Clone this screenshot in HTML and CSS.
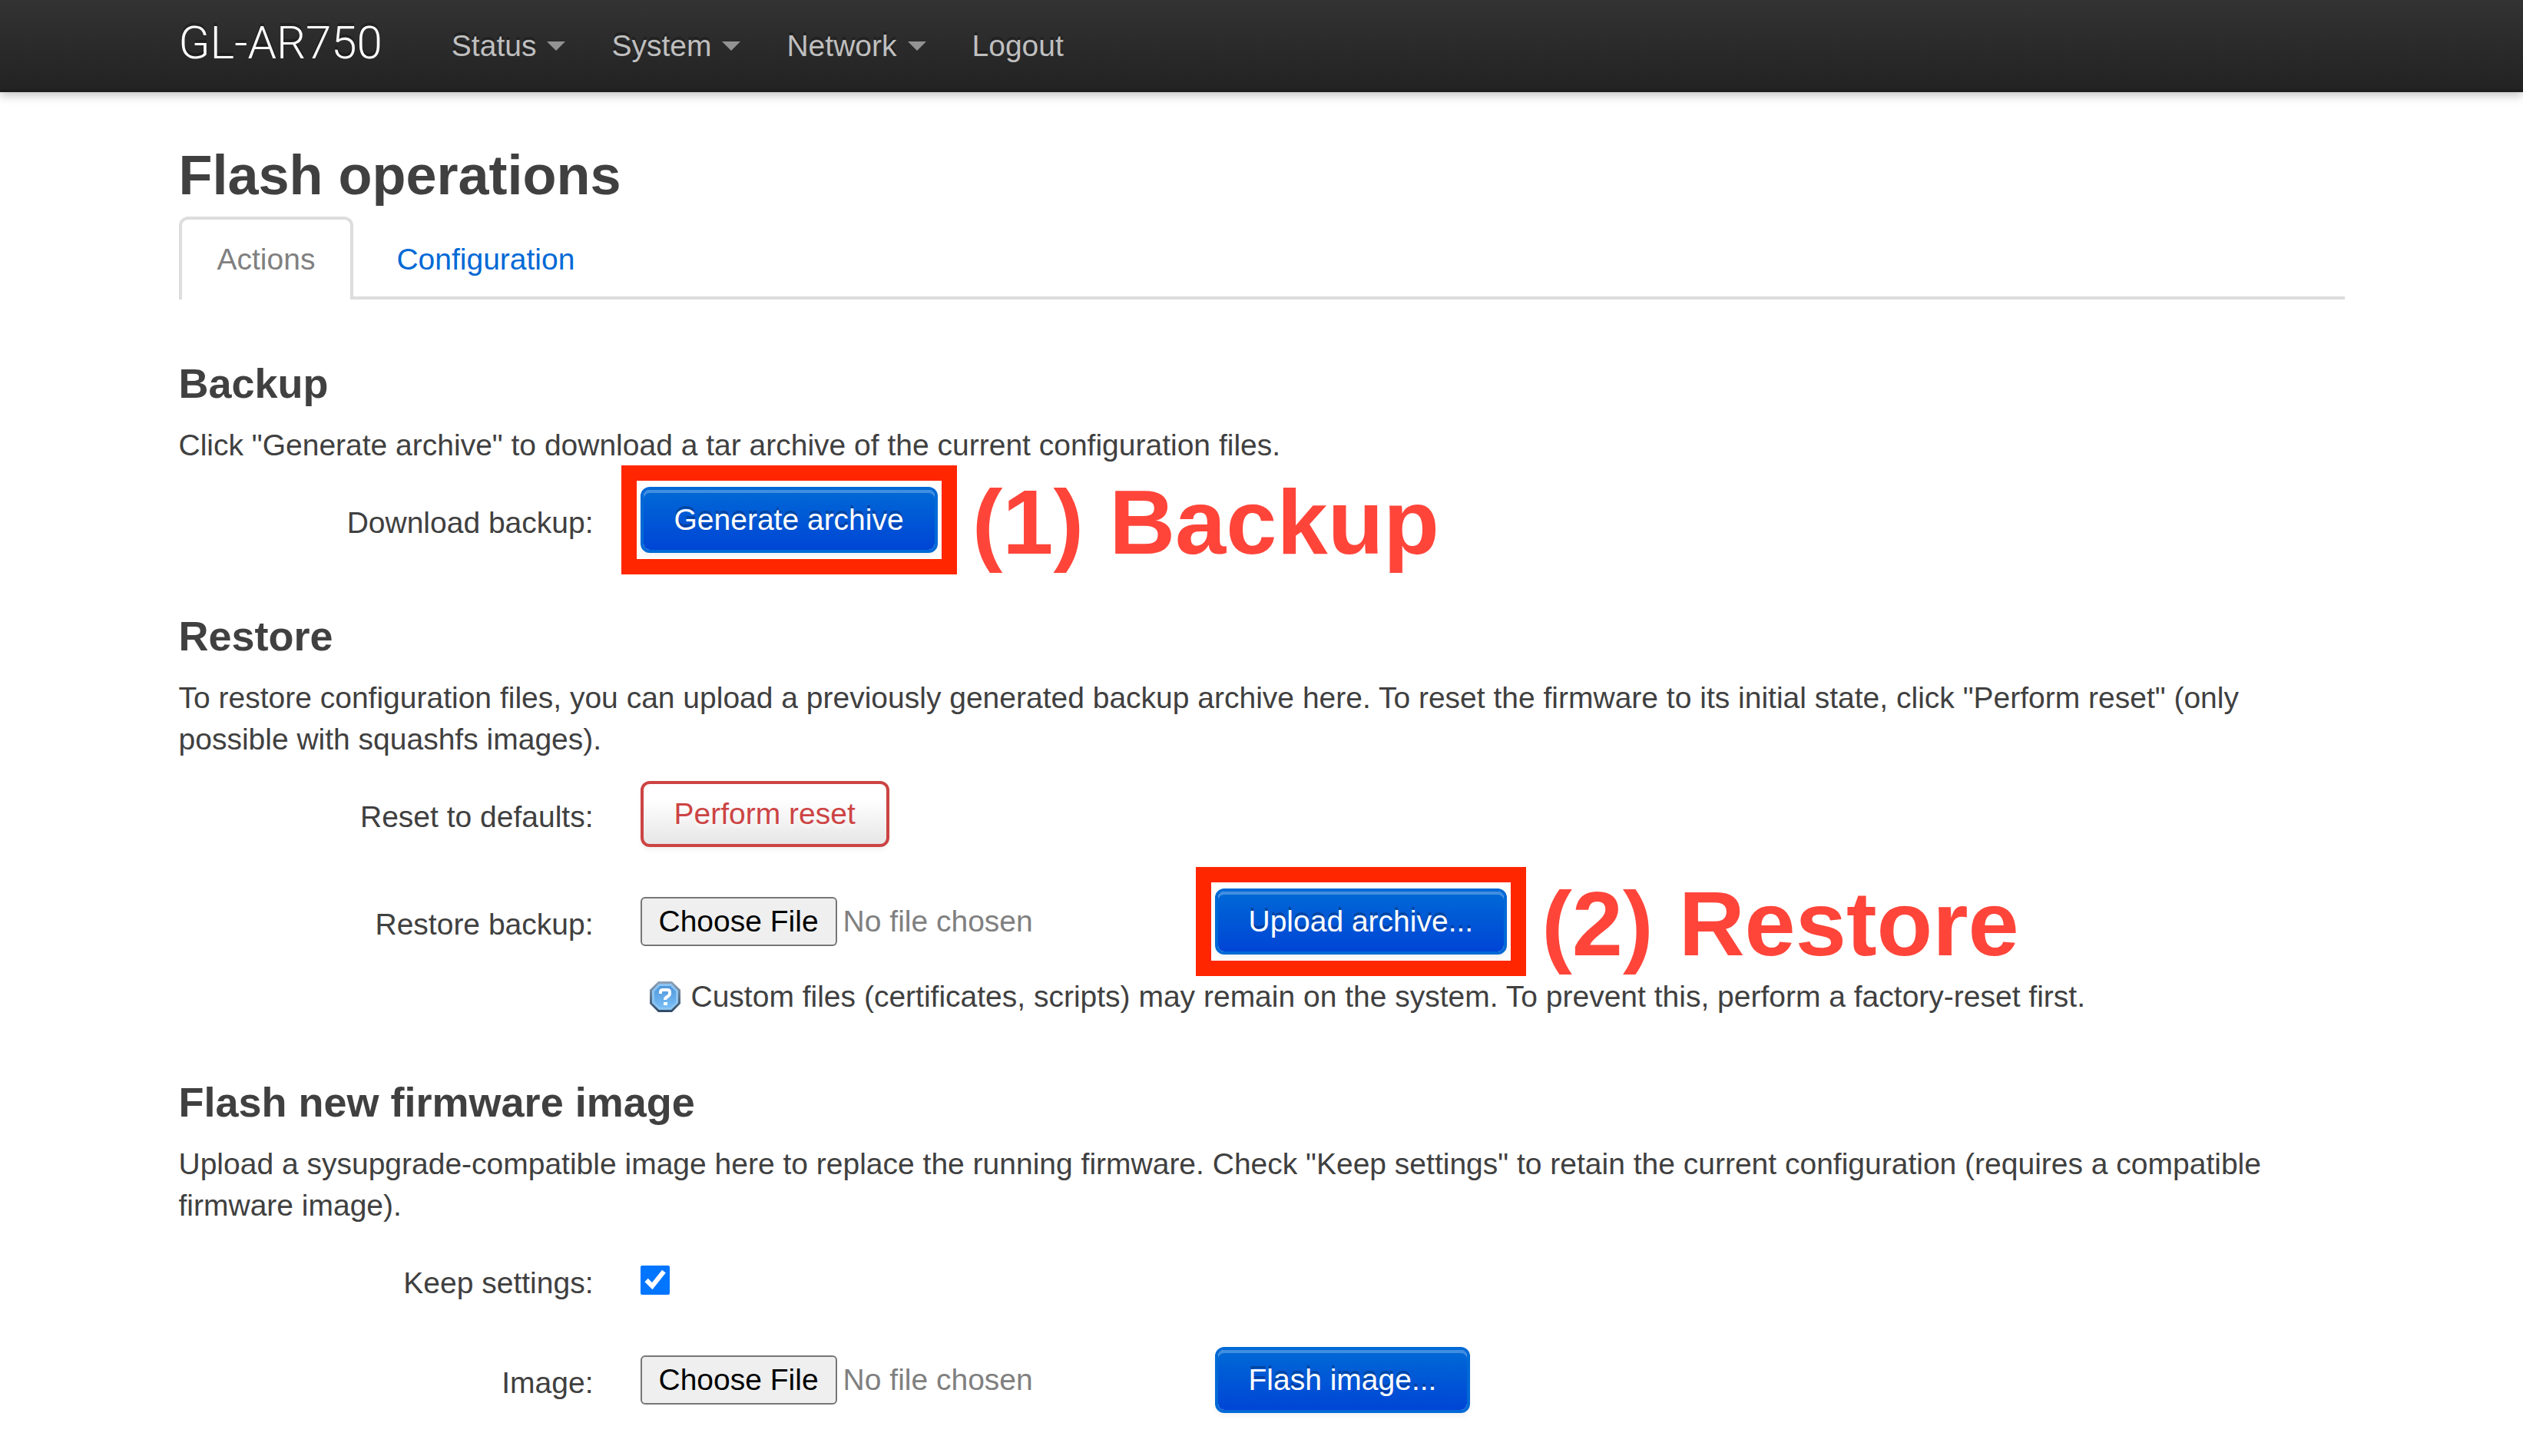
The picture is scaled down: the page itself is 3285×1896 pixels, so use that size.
FILE: index.html
```html
<!DOCTYPE html>
<html lang="en">
<head>
<meta charset="utf-8">
<title>GL-AR750 - Flash operations</title>
<link rel="stylesheet" href="styles.css">
</head>
<body>
<header class="topbar">
  <div class="container topbar-inner">
    <a class="brand" href="#">GL-AR750</a>
    <nav class="nav">
      <a class="nav-link" href="#">Status<span class="caret"></span></a>
      <a class="nav-link" href="#">System<span class="caret"></span></a>
      <a class="nav-link" href="#">Network<span class="caret"></span></a>
      <a class="nav-link" href="#">Logout</a>
    </nav>
  </div>
</header>
<main class="container main">
  <h2 class="title">Flash operations</h2>
  <ul class="tabs">
    <li><a class="tab tab-active" href="#">Actions</a></li>
    <li><a class="tab" href="#">Configuration</a></li>
  </ul>

  <section>
    <h3 class="subtitle">Backup</h3>
    <p class="descr">Click "Generate archive" to download a tar archive of the current configuration files.</p>
    <div class="row">
      <label class="row-label" for="generate">Download backup:</label>
      <div class="field">
        <div class="marked">
          <button class="btn btn-primary" id="generate" type="button">Generate archive</button>
          <span class="mark-frame"></span>
          <span class="mark-text">(1) Backup</span>
        </div>
      </div>
    </div>
  </section>

  <section>
    <h3 class="subtitle">Restore</h3>
    <p class="descr">To restore configuration files, you can upload a previously generated backup archive here. To reset the firmware to its initial state, click "Perform reset" (only possible with squashfs images).</p>
    <div class="row">
      <label class="row-label" for="reset">Reset to defaults:</label>
      <div class="field">
        <button class="btn btn-danger" id="reset" type="button">Perform reset</button>
      </div>
    </div>
    <div class="row">
      <label class="row-label" for="archive">Restore backup:</label>
      <div class="field">
        <div class="upload">
          <input class="file" id="archive" type="file">
          <div class="marked">
            <button class="btn btn-primary" type="button">Upload archive...</button>
            <span class="mark-frame"></span>
            <span class="mark-text">(2) Restore</span>
          </div>
        </div>
        <div class="hint">
          <svg class="hint-icon" viewBox="0 0 48 48" aria-hidden="true">
            <defs>
              <linearGradient id="help" x1="0" y1="0" x2="0" y2="1">
                <stop offset="0" stop-color="#4f97dc"/>
                <stop offset="1" stop-color="#78bdf5"/>
              </linearGradient>
              <linearGradient id="rim" x1="0" y1="0" x2="0" y2="1">
                <stop offset="0" stop-color="#8fa3b8"/>
                <stop offset="1" stop-color="#2f4a66"/>
              </linearGradient>
            </defs>
            <path d="M15 4h18l11 11v18L33 44H15L4 33V15z" fill="url(#rim)"/>
            <path d="M16 7h16l9 9v16l-9 9H16l-9-9V16z" fill="#8cc4f2"/>
            <path d="M17 10h14l7 7v14l-7 7H17l-7-7V17z" fill="url(#help)"/>
            <path d="M18 20v-2q0-3 3-3h6q3 0 3 3v2q0 2-3 4-3 1-3 4" fill="none" stroke="#fff" stroke-width="4"/>
            <rect x="22" y="31" width="5" height="4" fill="#fff"/>
          </svg>
          <span>Custom files (certificates, scripts) may remain on the system. To prevent this, perform a factory-reset first.</span>
        </div>
      </div>
    </div>
  </section>

  <section>
    <h3 class="subtitle">Flash new firmware image</h3>
    <p class="descr">Upload a sysupgrade-compatible image here to replace the running firmware. Check "Keep settings" to retain the current configuration (requires a compatible firmware image).</p>
    <div class="row">
      <label class="row-label" for="keep">Keep settings:</label>
      <div class="field">
        <input class="check" id="keep" type="checkbox" checked>
      </div>
    </div>
    <div class="row">
      <label class="row-label" for="image">Image:</label>
      <div class="field">
        <div class="upload">
          <input class="file" id="image" type="file">
          <button class="btn btn-primary" type="button">Flash image...</button>
        </div>
      </div>
    </div>
  </section>
</main>
</body>
</html>
```
FILE: styles.css
```css
* {
  box-sizing: border-box;
}

body {
  margin: 0;
  background: #fff;
  color: #404040;
  font: 39px/54px "Liberation Sans", Arial, sans-serif;
}

a {
  color: #0069d6;
  text-decoration: none;
}

.container {
  max-width: 2820px;
  margin: 0 auto;
}

.topbar {
  background: linear-gradient(#333, #222);
  box-shadow: 0 4px 12px rgba(0, 0, 0, .25), inset 0 -4px 0 rgba(0, 0, 0, .1);
}

.topbar-inner {
  display: flex;
  align-items: center;
  gap: 60px;
  height: 120px;
}

.brand {
  padding-bottom: 8px;
  color: #fff;
  font: 300 60px/108px Roboto, "Liberation Sans", sans-serif;
  text-shadow: 0 -4px 0 rgba(0, 0, 0, .25);
}

.nav {
  display: flex;
}

.nav-link {
  display: flex;
  align-items: center;
  gap: 14px;
  padding: 0 30px;
  color: #bfbfbf;
  text-shadow: 0 -4px 0 rgba(0, 0, 0, .25);
}

.caret {
  border: 12px solid transparent;
  border-top-color: #939393;
  border-bottom: 0;
}

.main {
  padding: 54px 0 56px;
}

.title {
  margin: 0;
  font-size: 72px;
  line-height: 108px;
}

.tabs {
  display: flex;
  gap: 6px;
  margin: 0 0 55px;
  padding: 0;
  border-bottom: 4px solid #ddd;
  list-style: none;
}

.tab {
  display: block;
  margin-bottom: -4px;
  padding: 0 46px;
  border: 4px solid transparent;
  border-bottom: 0;
  border-radius: 12px 12px 0 0;
  line-height: 104px;
}

.tab-active {
  border-color: #ddd;
  background: #fff;
  color: #808080;
}

.subtitle {
  margin: 0;
  font-size: 54px;
  line-height: 108px;
}

.descr {
  margin: 0 0 27px;
}

.row {
  display: grid;
  grid-template-columns: 540px 1fr;
  column-gap: 61px;
  min-height: 76px;
  margin-bottom: 54px;
}

.row-label {
  padding-top: 20px;
  text-align: right;
}

.btn {
  display: block;
  padding: 0 40px;
  border: 4px solid;
  border-radius: 12px;
  font: inherit;
  line-height: 78px;
  white-space: nowrap;
}

.btn-primary {
  border-color: #0069d6;
  background: linear-gradient(#0069d6, #0045d6) padding-box;
  box-shadow: inset 0 4px 0 rgba(255, 255, 255, .25), 0 4px 6px rgba(0, 0, 0, .05);
  color: #fff;
  text-shadow: 0 -4px 0 rgba(0, 0, 0, .25);
}

.btn-danger {
  border-color: #c44;
  background: linear-gradient(#fff 25%, #e6e6e6) padding-box;
  box-shadow: 0 4px 6px rgba(0, 0, 0, .05);
  color: #c44;
  text-shadow: 0 4px 4px rgba(255, 255, 255, .75);
}

.upload {
  display: flex;
  align-items: center;
}

.file {
  width: 748px;
  color: #808080;
  font: inherit;
  line-height: 60px;
}

.file::file-selector-button {
  margin: 0 8px 0 0;
  padding: 0 22px;
  border: 2px solid #767676;
  border-radius: 6px;
  background: #efefef;
  color: #000;
  font: inherit;
}

.check {
  display: block;
  width: 38px;
  height: 38px;
  margin: 24px 0 0;
  accent-color: #0075ff;
}

.hint {
  display: flex;
  align-items: center;
  gap: 10px;
  margin-top: 28px;
  padding: 0 0 2px 8px;
}

.hint-icon {
  width: 48px;
  height: 48px;
}

/* annotations drawn over the page */
.marked {
  position: relative;
  width: fit-content;
}

.mark-frame {
  position: absolute;
  inset: -28px -25px;
  border: 20px solid #ff2600;
  pointer-events: none;
}

.mark-text {
  position: absolute;
  top: -18px;
  left: calc(100% + 45px);
  color: #ff453a;
  font-size: 119px;
  font-weight: bold;
  line-height: 128px;
  white-space: nowrap;
}
```
